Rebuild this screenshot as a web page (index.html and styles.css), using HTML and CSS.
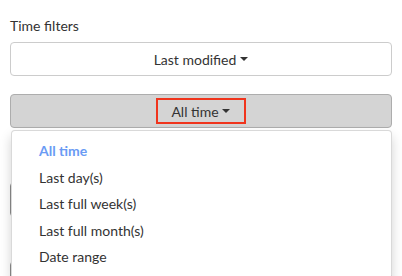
FILE: index.html
```html
<!DOCTYPE html>
<html lang="en">
<head>
  <meta charset="UTF-8">
  <meta name="viewport" content="width=device-width, initial-scale=1.0">
  <title>Time filters</title>
  <link rel="stylesheet" href="styles.css">
</head>
<body>
  <div class="panel">
    <div class="label">Time filters</div>
    <button type="button" class="btn">Last modified <span class="caret"></span></button>

    <div class="dropdown">
      <button type="button" class="btn active"><span class="hl">All time <span class="caret"></span></span></button>
      <ul class="menu">
        <li class="selected">All time</li>
        <li>Last day(s)</li>
        <li>Last full week(s)</li>
        <li>Last full month(s)</li>
        <li>Date range</li>
      </ul>
    </div>

    <div class="behind"></div>
    <div class="behind"></div>
  </div>
</body>
</html>
```

FILE: styles.css
```css
*{box-sizing:border-box;}
body{margin:0; background:#fff; font-family:Lato, "Noto Sans", sans-serif; color:#333;}
.panel{padding:16px 10px 0;}
.label{font-size:14px; line-height:20px; margin-bottom:6px;}
.btn{display:flex; align-items:center; justify-content:center; width:100%; height:34px; padding:0; border:1px solid #ccc; border-radius:4px; background:#fff; color:#333; font-family:inherit; font-size:14px;}
.btn.active{background:#d4d4d4; border-color:#adadad;}
.caret{display:inline-block; width:0; height:0; margin-left:4px; vertical-align:middle; border-top:4px solid #333; border-left:4px solid transparent; border-right:4px solid transparent;}
.dropdown{position:relative; margin-top:18px;}
.hl{display:inline-flex; align-items:center; height:26px; padding:0 14px 0 13px; border:2px solid #f0341c;}
.hl .caret{margin-left:3px;}
.menu{position:absolute; top:36px; left:1px; right:0; z-index:2; margin:0; padding:7px 0; list-style:none; background:#fff; border:1px solid rgba(0,0,0,.15); border-radius:4px; box-shadow:0 6px 12px rgba(0,0,0,.175); font-size:14px;}
.menu li{height:26.5px; line-height:26.5px; padding-left:27px; white-space:nowrap;}
.menu .selected{color:#6a9bf4; font-weight:bold;}
.behind{height:35px; margin-top:54px; background:#fff; border:1px solid #8c8c8c; border-radius:4px;}
.behind + .behind{margin-top:44px;}
```
